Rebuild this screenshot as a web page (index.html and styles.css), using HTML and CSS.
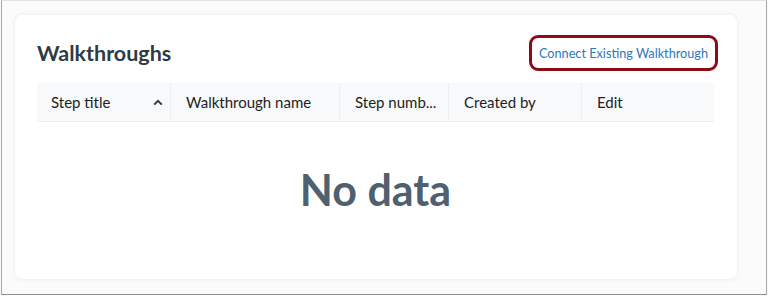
FILE: index.html
```html
<!DOCTYPE html>
<html>
<head>
<meta charset="utf-8">
<link rel="stylesheet" href="styles.css">
</head>
<body>
<div class="frame">
  <div class="card">
    <div class="card-head">
      <h2 class="title">Walkthroughs</h2>
      <button class="connect">Connect Existing Walkthrough</button>
    </div>
    <div class="thead">
      <div class="th c1"><span class="lbl">Step title</span>
        <svg class="sort" width="10" height="7" viewBox="0 0 10 7"><path d="M1.2 5.6 L5 1.8 L8.8 5.6" fill="none" stroke="#2d3b45" stroke-width="2"/></svg>
      </div>
      <div class="th c2"><span class="lbl">Walkthrough name</span></div>
      <div class="th c3"><span class="lbl">Step numb...</span></div>
      <div class="th c4"><span class="lbl">Created by</span></div>
      <div class="th c5"><span class="lbl">Edit</span></div>
    </div>
    <div class="empty">No data</div>
  </div>
</div>
</body>
</html>
```
FILE: styles.css
```css
html, body {
  margin: 0;
  padding: 0;
  background: #ffffff;
  font-family: Lato, "Liberation Sans", sans-serif;
}
.frame {
  margin-left: 1px;
  width: 766px;
  height: 295px;
  border: 1px solid #a9a9a9;
  border-top-color: #e4e4e4;
  border-bottom-color: #8f8f8f;
  background: #fbfbfb;
  box-sizing: border-box;
  padding: 14px 29px 0 13px;
  box-shadow: 0 1px 1px rgba(0,0,0,0.15);
}
.card {
  background: #ffffff;
  border-radius: 7px;
  box-shadow: 0 0 4px rgba(0,0,0,0.09);
  height: 264px;
  box-sizing: border-box;
  padding: 20px 23px 0 22px;
}
.card-head {
  display: flex;
  justify-content: space-between;
  align-items: center;
  height: 36px;
  margin-bottom: 12px;
}
.title {
  margin: 0;
  font-size: 21.5px;
  font-weight: 700;
  color: #2d3b45;
  padding-top: 0;
}
.connect {
  height: 36px;
  width: 189px;
  box-sizing: border-box;
  border: 3px solid #8e0b16;
  border-radius: 9px;
  background: #ffffff;
  color: #2b78c0;
  font-family: Lato, "Liberation Sans", sans-serif;
  font-size: 12.7px;
  padding: 0;
  margin-right: -4px;
  white-space: nowrap;
}
.thead {
  display: flex;
  height: 39px;
  background: #f8f9fa;
  border-bottom: 1px solid #eceff1;
  box-sizing: border-box;
}
.th {
  display: flex;
  align-items: center;
  box-sizing: border-box;
  padding: 0 15px;
  font-size: 15px;
  color: #1e1e1e;
  border-left: 1px solid #eceef0;
  white-space: nowrap;
}
.th.c1 { border-left: 0; padding-left: 14px; padding-right: 7px; justify-content: space-between; }
.c1 { width: 133px; }
.c2 { width: 169px; }
.c3 { width: 109px; }
.c4 { width: 133px; }
.c5 { width: 133px; }
.lbl {
  padding-bottom: 1px;
}
.sort { flex: none; }
.empty {
  padding-top: 42px;
  text-align: center;
  font-size: 43px;
  font-weight: 700;
  color: #4f6070;
  line-height: 1.2;
}
```
